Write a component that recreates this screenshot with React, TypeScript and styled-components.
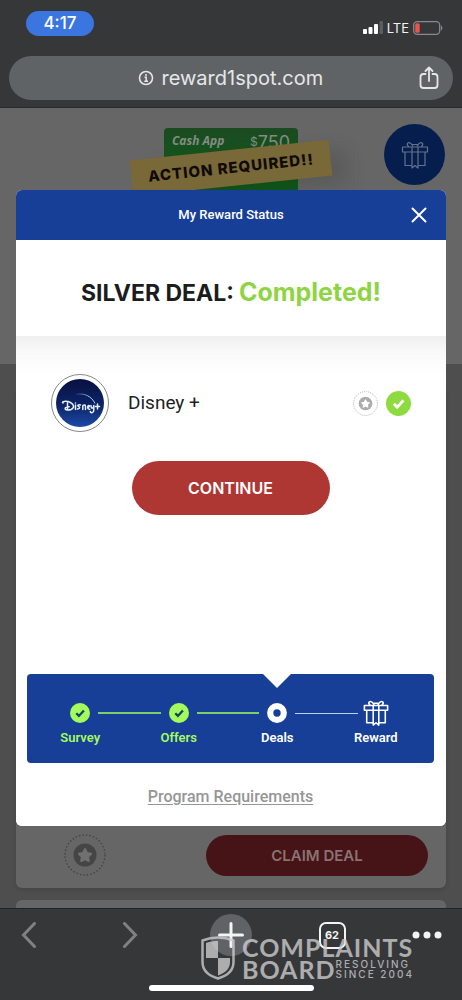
import React from "react";
import styled, { createGlobalStyle, css } from "styled-components";

const GlobalStyle = createGlobalStyle`
  *, *::before, *::after { box-sizing: border-box; }
  body { margin: 0; background: #363739; font-family: Roboto, "Liberation Sans", sans-serif; }
  button { border: 0; padding: 0; background: none; font: inherit; color: inherit; cursor: pointer; }
  h1, h2, p, ol, ul { margin: 0; padding: 0; list-style: none; }
  svg { display: block; }
`;

const display = css`
  font-family: Inter, "Liberation Sans", sans-serif;
`;

const Screen = styled.div`
  min-height: 100vh;
  display: flex;
  flex-direction: column;
`;

/* Browser chrome */

const BrowserTop = styled.header`
  background: #363739;
  padding: 11px 9px 7px;
  border-bottom: 1px solid #2b2b2d;
`;

const StatusBar = styled.div`
  display: flex;
  justify-content: space-between;
  align-items: flex-start;
  padding: 0 10px 0 17px;
  height: 45px;
`;

const Clock = styled.time`
  ${display}
  width: 68px;
  height: 25px;
  line-height: 25px;
  border-radius: 13px;
  background: #3a75e0;
  color: #fff;
  font-size: 17px;
  font-weight: 500;
  text-align: center;
`;

const Signals = styled.div`
  ${display}
  display: flex;
  align-items: center;
  gap: 4px;
  padding-top: 9px;
  color: #f2f2f2;
  font-size: 13px;
  line-height: 16px;
`;

const AddressBar = styled.div`
  display: grid;
  grid-template-columns: 32px 1fr 32px;
  align-items: center;
  height: 44px;
  padding: 0 8px;
  border-radius: 22px;
  background: #5f6366;
  color: #e6e7e8;
`;

const AddressField = styled.label`
  grid-column: 2;
  display: flex;
  align-items: center;
  justify-content: center;
  gap: 8px;
`;

const AddressInput = styled.input`
  ${display}
  width: 163px;
  border: 0;
  padding: 0;
  background: none;
  outline: none;
  color: inherit;
  font-size: 20px;
  line-height: 28px;
`;

const ShareButton = styled.button`
  justify-self: center;
`;

/* Dimmed page */

const Stage = styled.main`
  flex: 1;
  display: grid;
  grid-template-columns: minmax(0, 1fr);
  overflow: hidden;
  background: #4e4e4e;
`;

const Page = styled.div`
  grid-area: 1 / 1;
  display: flex;
  flex-direction: column;
`;

const Hero = styled.section`
  position: relative;
  height: 256px;
  padding-top: 20px;
  background: #666;
`;

const GiftCard = styled.div`
  ${display}
  width: 134px;
  height: 100px;
  margin: 0 auto;
  padding: 4px 8px;
  display: flex;
  justify-content: space-between;
  border-radius: 4px;
  background: linear-gradient(#1c4a21, #11591c 40%);
  color: #838c83;
`;

const CardBrand = styled.span`
  font-family: "Open Sans", sans-serif;
  font-size: 12px;
  line-height: 18px;
  font-weight: 700;
  font-style: italic;
`;

const CardValue = styled.span`
  font-size: 18px;
  line-height: 21px;

  sup {
    font-size: 12px;
    line-height: 12px;
    vertical-align: 3px;
  }
`;

const Ribbon = styled.p`
  ${display}
  position: absolute;
  top: 42px;
  left: 50%;
  width: 200px;
  height: 36px;
  margin-left: -100px;
  line-height: 36px;
  transform: rotate(-6deg);
  background: #796838;
  box-shadow: 16px 10px 20px rgba(0, 0, 0, 0.12);
  color: #100b08;
  font-size: 15px;
  font-weight: 800;
  letter-spacing: 1px;
  text-align: center;
  white-space: nowrap;
`;

const GiftButton = styled.button`
  position: absolute;
  top: 16px;
  right: 17px;
  width: 61px;
  height: 61px;
  display: grid;
  place-items: center;
  border-radius: 50%;
  background: #051e4e;
  color: #64738c;
`;

const DealList = styled.ul`
  flex: 1;
  display: flex;
  flex-direction: column;
  gap: 12px;
  padding: 24px 16px 0;
`;

const DealCard = styled.li`
  height: 500px;
  display: flex;
  align-items: flex-end;
  justify-content: space-between;
  padding: 12px 18px 12px 48px;
  border-radius: 6px;
  background: #666;
  box-shadow: 0 2px 4px rgba(0, 0, 0, 0.12);
`;

const NextCard = styled.li`
  flex: 1;
  min-height: 8px;
  border-radius: 6px 6px 0 0;
  background: #666;
`;

const PillButton = styled.button<{ $size: "claim" | "continue" }>`
  ${display}
  font-weight: 600;
  text-align: center;
  ${(p) =>
    p.$size === "claim"
      ? css`
          width: 222px;
          height: 41px;
          border-radius: 21px;
          background: #461416;
          color: #8a7372;
          font-size: 15px;
        `
      : css`
          width: 198px;
          height: 54px;
          border-radius: 27px;
          background: #ae3633;
          color: #fff;
          font-size: 16px;
        `}
`;

/* Reward dialog */

const Dialog = styled.section`
  grid-area: 1 / 1;
  z-index: 1;
  align-self: start;
  margin: 82px 16px 0;
  border-radius: 6px;
  overflow: hidden;
  background: #fff;
`;

const DialogHeader = styled.header`
  display: grid;
  grid-template-columns: 40px 1fr 40px;
  align-items: center;
  height: 50px;
  padding: 0 7px;
  background: #183f97;
  color: #fff;
`;

const DialogTitle = styled.h2`
  grid-column: 2;
  font-size: 13px;
  line-height: 20px;
  font-weight: 500;
  text-align: center;
`;

const CloseButton = styled.button`
  display: grid;
  place-items: center;
  height: 40px;
`;

const DealHeading = styled.h1`
  ${display}
  display: flex;
  align-items: baseline;
  justify-content: center;
  gap: 5px;
  height: 96px;
  padding-top: 38px;
  color: #1c1c1e;
  font-size: 23px;
  line-height: 28px;
  font-weight: 700;

  span {
    color: #8fd443;
    font-size: 25px;
  }
`;

const DialogBody = styled.div`
  display: flex;
  flex-direction: column;
  align-items: center;
  padding: 38px 12px 19px 11px;
  background: linear-gradient(#efefef, #f9f9f9 16px, #fff 38px);
`;

const DealRow = styled.div`
  align-self: stretch;
  display: flex;
  align-items: center;
  gap: 8px;
  margin-bottom: 29px;
  padding: 0 23px 0 24px;
`;

const LogoRing = styled.div`
  padding: 4px;
  border: 1px solid #85868c;
  border-radius: 50%;
`;

const DealName = styled.p`
  flex: 1;
  padding-left: 11px;
  color: #1f1f1f;
  font-size: 19px;
  line-height: 24px;
`;

const Progress = styled.ol`
  align-self: stretch;
  display: grid;
  grid-template-columns: repeat(4, 1fr);
  height: 89px;
  margin-top: 159px;
  padding: 0 9px 0 4px;
  border-radius: 4px;
  background: #183f97;
`;

type State = "done" | "current" | "next";
const stateColor = { done: "#a4fb5c", current: "#ffffff", next: "#ffffff" };

const StepItem = styled.li<{ $state: State }>`
  position: relative;
  display: grid;
  grid-template-columns: 1fr 36px 1fr;
  grid-template-rows: 28px 20px;
  row-gap: 1px;
  align-items: center;
  justify-items: center;
  padding-top: 25px;
  color: ${(p) => stateColor[p.$state]};

  ${(p) =>
    p.$state === "current" &&
    css`
      &::before {
        content: "";
        position: absolute;
        top: 0;
        left: calc(50% - 14px);
        border: 14px solid transparent;
        border-top-color: #fff;
        border-bottom: 0;
      }
    `}
`;

const Connector = styled.span<{ $tone: "green" | "white" | "none" }>`
  justify-self: stretch;
  height: ${(p) => (p.$tone === "green" ? 2 : 1)}px;
  background: ${(p) =>
    p.$tone === "green" ? "#7bd06c" : p.$tone === "white" ? "#c3d0ee" : "transparent"};
`;

const StepLabel = styled.span`
  grid-column: 1 / -1;
  font-size: 13px;
  line-height: 20px;
  font-weight: 600;
`;

const RequirementsLink = styled.a`
  margin-top: 24px;
  color: #969696;
  font-size: 16px;
  line-height: 20px;
  font-weight: 500;
  text-underline-offset: 2px;
`;

/* Bottom toolbar */

const Toolbar = styled.footer`
  position: relative;
  height: 92px;
  padding: 5px 20px 5px 8px;
  border-top: 1px solid #222224;
  background: #363739;
  color: #f4f4f4;
`;

const ToolbarNav = styled.nav`
  display: flex;
  align-items: center;
  justify-content: space-between;
`;

const ToolButton = styled.button<{ $muted?: boolean }>`
  width: 42px;
  height: 42px;
  display: grid;
  place-items: center;
  color: ${(p) => (p.$muted ? "#808183" : "#f4f4f4")};
`;

const NewTabButton = styled(ToolButton)`
  border-radius: 50%;
  background: #5f6366;
`;

const MenuButton = styled(ToolButton)`
  width: 30px;
`;

const TabCount = styled.span`
  ${display}
  width: 27px;
  height: 27px;
  display: grid;
  place-items: center;
  border: 2px solid #f4f4f4;
  border-radius: 7px;
  font-size: 11px;
  line-height: 14px;
  font-weight: 700;
`;

const HomeIndicator = styled.div`
  position: absolute;
  bottom: 9px;
  left: 50%;
  width: 165px;
  height: 6px;
  margin-left: -82px;
  border-radius: 3px;
  background: #fff;
`;

const Watermark = styled.div`
  position: absolute;
  top: 27px;
  right: 49px;
  display: flex;
  gap: 7px;
  color: #cfcfd0;
  opacity: 0.78;
  font-family: Lato, sans-serif;
  pointer-events: none;
`;

const WatermarkName = styled.div`
  width: 171px;
  font-size: 25px;
  line-height: 22px;
  font-weight: 700;
  letter-spacing: 1px;
  white-space: nowrap;
`;

const WatermarkRow = styled.div`
  display: flex;
`;

const Tagline = styled.span`
  display: flex;
  flex-direction: column;
  padding-top: 1px;
  font-family: Inter, sans-serif;
  font-size: 10px;
  line-height: 10px;
  font-weight: 500;
  letter-spacing: 2px;
`;

function GiftIcon({ size, weight = 2 }: { size: number; weight?: number }) {
  return (
    <svg width={size} height={size} viewBox="0 0 28 28" fill="none" stroke="currentColor" strokeWidth={weight} strokeLinejoin="round" aria-hidden="true">
      <rect x="1.500" y="6" width="25" height="5" />
      <path d="M4 11v13.500h7M24 11v13.500h-7" />
      <path d="M11 6v21l3-2.500 3 2.500V6" />
      <path d="M12 5.500C10.500 2 8 .8 6.700 2.200 5.700 3.400 6.500 4.800 7.800 6M16 5.500c1.500-3.500 4-4.700 5.300-3.300 1 1.200.2 2.600-1.100 3.800M11.500 3.500h5" />
    </svg>
  );
}

function CheckIcon({ size, disc, mark }: { size: number; disc: string; mark: string }) {
  return (
    <svg width={size} height={size} viewBox="0 0 24 24" aria-hidden="true">
      <circle cx="12" cy="12" r="12" fill={disc} />
      <path d="M7.500 12.300l3.200 3.200 6-6.500" fill="none" stroke={mark} strokeWidth="2.800" />
    </svg>
  );
}

function StarBadge({ size, disc, star, ring }: { size: number; disc: string; star: string; ring: string }) {
  return (
    <svg width={size} height={size} viewBox="0 0 42 42" aria-hidden="true">
      <circle cx="21" cy="21" r="20" fill="none" stroke={ring} strokeWidth="1.400" strokeDasharray="1.500 2" />
      <circle cx="21" cy="21" r="11.500" fill={disc} />
      <path d="M21 15l2 4 4.200.7-3.100 3 .7 4.300-3.800-2-3.800 2 .7-4.300-3.100-3 4.200-.7z" fill={star} stroke={star} strokeWidth="2" strokeLinejoin="round" />
    </svg>
  );
}

function DisneyLogo() {
  return (
    <svg width="48" height="48" viewBox="0 0 48 48" role="img" aria-label="Disney +">
      <defs>
        <linearGradient id="sky" x1="0" y1="0" x2="0" y2="1">
          <stop offset="0" stopColor="#08103f" />
          <stop offset="0.550" stopColor="#0d2468" />
          <stop offset="1" stopColor="#1b4aa8" />
        </linearGradient>
        <linearGradient id="arc" x1="0" y1="0" x2="1" y2="0">
          <stop offset="0" stopColor="#5fa4dc" stopOpacity="0.200" />
          <stop offset="0.700" stopColor="#8fd6f2" />
        </linearGradient>
      </defs>
      <circle cx="24" cy="24" r="24" fill="url(#sky)" />
      <path d="M20 15.500c8-2 16 2 19 9" fill="none" stroke="url(#arc)" strokeWidth="1" />
      <g fill="none" stroke="#e8f1ff" strokeWidth="1.500" strokeLinecap="round" strokeLinejoin="round">
        <path d="M7 24c-2-1.500 3-2.500 7.500-.5 4 2 4 5.500.5 7-2 .8-5 .7-5.800-.5-.5-1.500 1.500-2.200 4-2.200M11.500 24v6" />
        <path d="M19.500 26v4.500M19.500 24v.1M24.500 26c-2-.8-3.500.4-2 1.300s2 2-1 2.700M26.800 30.500V26.500c1.500-1 2.700-.5 2.700 1V30.500M32 28.500c1.500-.3 1.800-2 .7-2s-1.800 4 1 3.800M35 26.500c0 4 2.800 3 2.800 0v4.500c0 3-3 3.500-3.500 1.500" />
        <path d="M41.500 25v5M39.500 27.500h4" />
      </g>
    </svg>
  );
}

function ShieldIcon() {
  return (
    <svg width="34" height="44" viewBox="0 0 34 44" aria-hidden="true">
      <path d="M17 1.500c5.500 0 10.500 1 15.500 3V26c0 9-7 14-15.500 16.500C8.500 40 1.500 35 1.500 26V4.500c5-2 10-3 15.500-3z" fill="none" stroke="currentColor" strokeWidth="2.500" />
      <path d="M17 5v17H5V7c4-1.500 8-2 12-2zM17 22h12v4c0 7-5 11-12 13.500z" fill="currentColor" />
    </svg>
  );
}

type Tone = "green" | "white" | "none";

const steps: { label: string; state: State; before: Tone; after: Tone }[] = [
  { label: "Survey", state: "done", before: "none", after: "green" },
  { label: "Offers", state: "done", before: "green", after: "green" },
  { label: "Deals", state: "current", before: "green", after: "white" },
  { label: "Reward", state: "next", before: "white", after: "none" },
];

function StepIcon({ state }: { state: State }) {
  if (state === "done") return <CheckIcon size={20} disc="#a4fb5c" mark="#12436a" />;
  if (state === "next") return <GiftIcon size={26} weight={1.7} />;
  return (
    <svg width="20" height="20" viewBox="0 0 20 20" aria-hidden="true">
      <circle cx="10" cy="10" r="6.800" fill="none" stroke="#fff" strokeWidth="6.200" />
    </svg>
  );
}

export default function App() {
  return (
    <Screen>
      <GlobalStyle />
      <BrowserTop>
        <StatusBar>
          <Clock>4:17</Clock>
          <Signals>
            <svg width="20" height="14" viewBox="0 0 20 14" aria-label="Signal" fill="#fff">
              <rect x="0" y="8" width="4" height="5" rx="1" />
              <rect x="5.500" y="6" width="4" height="7" rx="1" />
              <rect x="11" y="3" width="4" height="10" rx="1" />
              <rect x="16.500" y="0" width="3.500" height="13" rx="1" fill="#5c5d5f" />
            </svg>
            <span>LTE</span>
            <svg width="30" height="14" viewBox="0 0 30 14" aria-label="Battery low">
              <rect x="0.700" y="0.700" width="26" height="12.600" rx="3.500" fill="none" stroke="#88898b" strokeWidth="1.300" />
              <rect x="2.200" y="2.200" width="4.500" height="9.600" rx="1.500" fill="#e8564b" />
              <path d="M28 4.500c1.800.8 1.800 4.200 0 5z" fill="#88898b" />
            </svg>
          </Signals>
        </StatusBar>
        <AddressBar>
          <AddressField>
            <svg width="16" height="16" viewBox="0 0 16 16" fill="none" stroke="currentColor" aria-hidden="true">
              <circle cx="8" cy="8" r="6.500" strokeWidth="1.600" />
              <path d="M6.500 7.200H8.200v4M6.300 11.200h3.700" strokeWidth="1.500" />
              <circle cx="8" cy="4.900" r="1" fill="currentColor" stroke="none" />
            </svg>
            <AddressInput type="text" aria-label="Address" defaultValue="reward1spot.com" />
          </AddressField>
          <ShareButton aria-label="Share">
            <svg width="20" height="24" viewBox="0 0 20 24" fill="none" stroke="currentColor" strokeWidth="1.800" strokeLinecap="round" strokeLinejoin="round">
              <path d="M6.500 8H4.500C2.500 8 1.500 9 1.500 11v8c0 2 1 3 3 3h11c2 0 3-1 3-3v-8c0-2-1-3-3-3h-2M10 15V2M6.500 5L10 1.500 13.500 5" />
            </svg>
          </ShareButton>
        </AddressBar>
      </BrowserTop>

      <Stage>
        <Page>
          <Hero>
            <GiftCard>
              <CardBrand>Cash App</CardBrand>
              <CardValue><sup>$</sup>750</CardValue>
            </GiftCard>
            <Ribbon>ACTION REQUIRED!!</Ribbon>
            <GiftButton aria-label="Rewards"><GiftIcon size={28} weight={1.2} /></GiftButton>
          </Hero>
          <DealList>
            <DealCard>
              <StarBadge size={42} disc="#454545" star="#707070" ring="#444" />
              <PillButton $size="claim">CLAIM DEAL</PillButton>
            </DealCard>
            <NextCard />
          </DealList>
        </Page>

        <Dialog role="dialog" aria-labelledby="dialog-title">
          <DialogHeader>
            <DialogTitle id="dialog-title">My Reward Status</DialogTitle>
            <CloseButton aria-label="Close">
              <svg width="16" height="16" viewBox="0 0 16 16" stroke="currentColor" strokeWidth="2" strokeLinecap="round">
                <path d="M1.500 1.500l13 13M14.500 1.500l-13 13" />
              </svg>
            </CloseButton>
          </DialogHeader>
          <DealHeading>SILVER DEAL: <span>Completed!</span></DealHeading>
          <DialogBody>
            <DealRow>
              <LogoRing><DisneyLogo /></LogoRing>
              <DealName>Disney +</DealName>
              <StarBadge size={25} disc="#acacac" star="#fff" ring="#999" />
              <CheckIcon size={25} disc="#8edb40" mark="#fff" />
            </DealRow>
            <PillButton $size="continue">CONTINUE</PillButton>
            <Progress>
              {steps.map((s) => (
                <StepItem key={s.label} $state={s.state} aria-current={s.state === "current" ? "step" : undefined}>
                  <Connector $tone={s.before} />
                  <StepIcon state={s.state} />
                  <Connector $tone={s.after} />
                  <StepLabel>{s.label}</StepLabel>
                </StepItem>
              ))}
            </Progress>
            <RequirementsLink href="#requirements">Program Requirements</RequirementsLink>
          </DialogBody>
        </Dialog>
      </Stage>

      <Toolbar>
        <ToolbarNav aria-label="Browser">
          <ToolButton $muted aria-label="Back">
            <svg width="16" height="26" viewBox="0 0 16 26" fill="none" stroke="currentColor" strokeWidth="3" strokeLinecap="round"><path d="M13.500 1.500L2.500 13l11 11.500" /></svg>
          </ToolButton>
          <ToolButton $muted aria-label="Forward">
            <svg width="16" height="26" viewBox="0 0 16 26" fill="none" stroke="currentColor" strokeWidth="3" strokeLinecap="round"><path d="M2.500 1.500L13.500 13l-11 11.500" /></svg>
          </ToolButton>
          <NewTabButton aria-label="New tab">
            <svg width="26" height="26" viewBox="0 0 26 26" stroke="currentColor" strokeWidth="3" strokeLinecap="round"><path d="M13 1.500v23M1.500 13h23" /></svg>
          </NewTabButton>
          <ToolButton aria-label="Tabs"><TabCount>62</TabCount></ToolButton>
          <MenuButton aria-label="Menu">
            <svg width="30" height="8" viewBox="0 0 30 8" fill="currentColor"><circle cx="4" cy="4" r="3.500" /><circle cx="15" cy="4" r="3.500" /><circle cx="26" cy="4" r="3.500" /></svg>
          </MenuButton>
        </ToolbarNav>
        <Watermark>
          <ShieldIcon />
          <WatermarkName>
            <WatermarkRow>COMPLAINTS</WatermarkRow>
            <WatermarkRow>
              <span>BOARD</span>
              <Tagline><span>RESOLVING</span><span>SINCE 2004</span></Tagline>
            </WatermarkRow>
          </WatermarkName>
        </Watermark>
        <HomeIndicator />
      </Toolbar>
    </Screen>
  );
}
